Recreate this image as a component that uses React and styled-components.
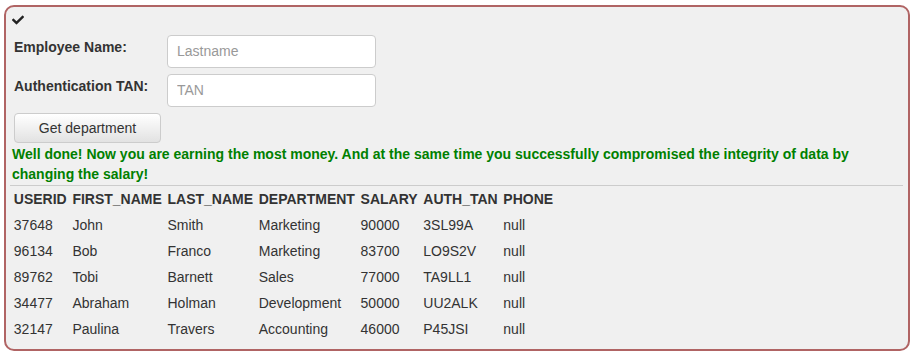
import styled, { createGlobalStyle } from "styled-components";
import { FaCheck } from "react-icons/fa";

const GlobalStyle = createGlobalStyle`
  body {
    margin: 0;
    background: #ffffff;
    font-family: "Liberation Sans", Arial, sans-serif;
    font-size: 14px;
    color: #333333;
  }
`;

const rows = [
  ["37648", "John", "Smith", "Marketing", "90000", "3SL99A", "null"],
  ["96134", "Bob", "Franco", "Marketing", "83700", "LO9S2V", "null"],
  ["89762", "Tobi", "Barnett", "Sales", "77000", "TA9LL1", "null"],
  ["34477", "Abraham", "Holman", "Development", "50000", "UU2ALK", "null"],
  ["32147", "Paulina", "Travers", "Accounting", "46000", "P45JSI", "null"],
];

const columns = ["USERID", "FIRST_NAME", "LAST_NAME", "DEPARTMENT", "SALARY", "AUTH_TAN", "PHONE"];

function App() {
  return (
    <>
      <GlobalStyle />
      <Panel>
        <IconRow>
          <FaCheck size={12} />
        </IconRow>
        <Form>
          <Label>Employee Name:</Label>
          <Input placeholder="Lastname" />
          <Label>Authentication TAN:</Label>
          <Input placeholder="TAN" />
        </Form>
        <Button type="button">Get department</Button>
        <Feedback>
          Well done! Now you are earning the most money. And at the same time you successfully compromised the integrity of data by changing the salary!
        </Feedback>
        <Rule />
        <Table>
          <thead>
            <tr>
              {columns.map((c) => (
                <Th key={c}>{c}</Th>
              ))}
            </tr>
          </thead>
          <tbody>
            {rows.map((r) => (
              <tr key={r[0]}>
                {r.map((v, i) => (
                  <Td key={i}>{v}</Td>
                ))}
              </tr>
            ))}
          </tbody>
        </Table>
      </Panel>
    </>
  );
}

const Panel = styled.div`
  box-sizing: border-box;
  width: 906px;
  margin: 5px 0 0 4px;
  padding: 5px 5px 6px 4px;
  background: #f0f0f0;
  border: 2px solid #b06464;
  border-radius: 10px;
`;

const IconRow = styled.div`
  height: 14px;
  display: flex;
  align-items: center;
  padding: 1px 0 0 2px;
  color: #222;
`;

const Form = styled.div`
  display: grid;
  grid-template-columns: 153px 209px;
  grid-auto-rows: 33px;
  row-gap: 6px;
  align-items: center;
  margin-top: 8px;
  padding-left: 4px;
`;

const Label = styled.label`
  font-weight: bold;
  margin-bottom: 9px;
`;

const Input = styled.input`
  box-sizing: border-box;
  width: 209px;
  height: 33px;
  padding: 0 9px 2px;
  border: 1px solid #cccccc;
  border-radius: 4px;
  background: #ffffff;
  font-family: inherit;
  font-size: 14px;
  color: #555;
  &::placeholder {
    color: #999999;
  }
`;

const Button = styled.button`
  box-sizing: border-box;
  display: block;
  width: 147px;
  height: 30px;
  margin: 6px 0 0 4px;
  border: 1px solid #cccccc;
  border-radius: 4px;
  background: linear-gradient(#ffffff, #e2e2e2);
  font-family: inherit;
  font-size: 14px;
  color: #333333;
`;

const Feedback = styled.p`
  margin: 1px 0 0 2px;
  font-weight: bold;
  line-height: 20px;
  color: #008000;
`;

const Rule = styled.hr`
  margin: 1px 0 0;
  border: 0;
  border-top: 1px solid #cccccc;
`;

const Table = styled.table`
  border-spacing: 2px;
  margin-top: -1px;
`;

const Th = styled.th`
  padding: 2px 1.84px;
  text-align: left;
  font-weight: bold;
  line-height: 20px;
`;

const Td = styled.td`
  padding: 2px 1.84px;
  line-height: 20px;
`;

export default App;
